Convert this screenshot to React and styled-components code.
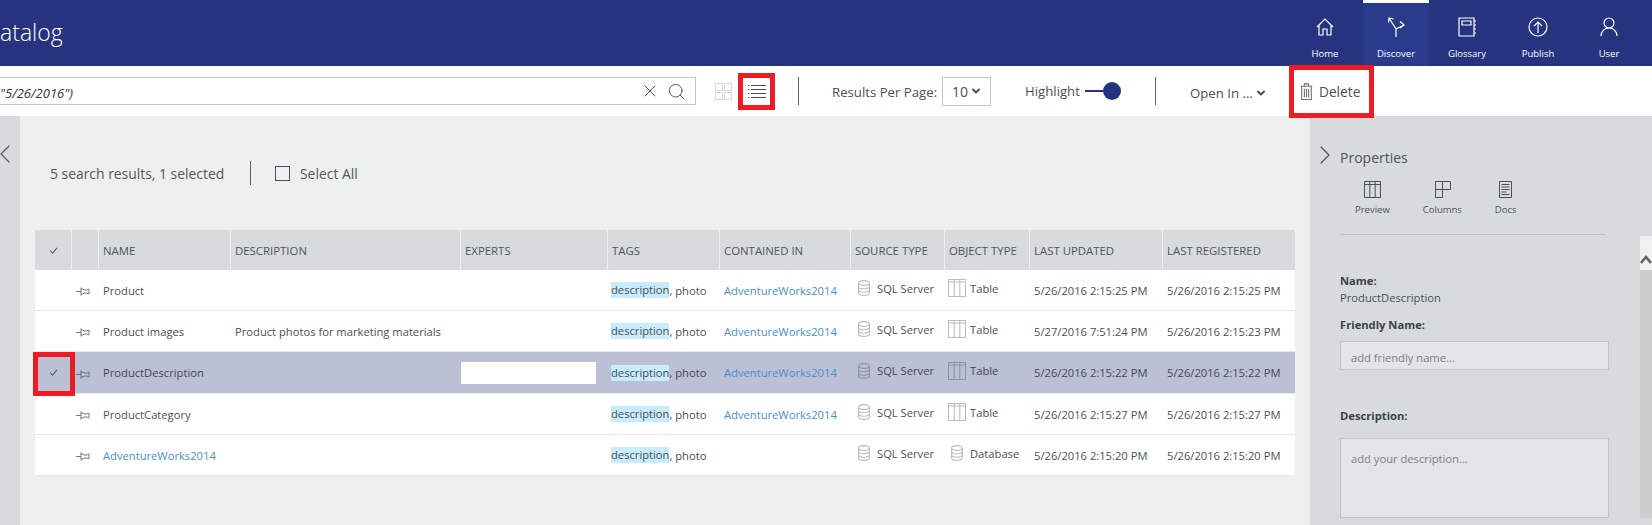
import React from 'react';
import styled, { createGlobalStyle } from 'styled-components';
import { ChevronDown, ChevronLeft, ChevronRight, Search, X } from 'lucide-react';

const GlobalStyle = createGlobalStyle`
    html, body {
        margin: 0;
        padding: 0;
        height: 100%;
        overflow: hidden;
        font-family: "Open Sans", "Noto Sans", "Liberation Sans", sans-serif;
        color: #4a4f59;
    }
`;

const Page = styled.div`
    width: 1652px;
    height: 525px;
    display: flex;
    flex-direction: column;
    overflow: hidden;
`;

// header
const TopBar = styled.header`
    height: 66px;
    flex: none;
    background: #263480;
    display: flex;
    justify-content: space-between;
    padding-right: 10px;
`;

const Title = styled.div`
    color: #fff;
    font-size: 23px;
    font-weight: 300;
    line-height: 64px;
`;

const Nav = styled.nav`
    display: flex;
    gap: 5px;
`;

const NavItem = styled.div`
    width: 66px;
    height: 66px;
    box-sizing: border-box;
    border-top: 3px solid ${(p) => (p.$active ? '#fff' : 'transparent')};
    background: ${(p) => (p.$active ? '#2b3b8b' : 'transparent')};
    color: #fff;
    display: flex;
    flex-direction: column;
    align-items: center;
    padding-top: 13px;
    font-size: 9.5px;
    svg {
        width: 22px;
        height: 22px;
        margin-bottom: 9px;
        fill: none;
        stroke: currentColor;
        stroke-width: 1.2;
    }
`;

// toolbar
const Toolbar = styled.div`
    height: 50px;
    flex: none;
    background: #fff;
    display: flex;
    align-items: center;
    font-size: 13.2px;
    white-space: nowrap;
`;

const SearchBox = styled.div`
    width: 697px;
    height: 28px;
    margin-left: -1px;
    box-sizing: border-box;
    border: 1px solid #c2c6ca;
    display: flex;
    align-items: center;
    font-style: italic;
    color: #333;
    font-size: 13px;
    svg {
        color: #555;
        stroke-width: 1.2;
        flex: none;
    }
`;

const QueryText = styled.span`
    flex: 1;
    padding-top: 4px;
`;

const SearchIcon = styled(Search)`
    margin: 0 9px 0 7px;
`;

const GridToggle = styled.svg`
    width: 17px;
    height: 17px;
    margin-left: 19px;
    fill: none;
    stroke: #d5d7da;
`;

const Marked = styled.div`
    box-sizing: border-box;
    border: 5px solid #ed1c24;
    display: flex;
    align-items: center;
    background: #fff;
    position: relative;
    z-index: 1;
`;

const ListButton = styled(Marked)`
    width: 37px;
    height: 37px;
    margin-left: 6px;
    justify-content: center;
    svg {
        width: 18px;
        height: 13px;
        stroke: #4a4f59;
    }
`;

const VRule = styled.div`
    width: 1px;
    height: 28px;
    background: #5b616b;
    margin-left: ${(p) => p.$ml}px;
    flex: none;
`;

const ToolLabel = styled.span`
    display: block;
    width: ${(p) => p.$w}px;
    margin-left: ${(p) => p.$ml}px;
    padding-top: ${(p) => p.$pt ?? 0}px;
    flex: none;
`;

const PerPage = styled.div`
    width: 49px;
    height: 29px;
    margin-left: 5px;
    box-sizing: border-box;
    border: 1px solid #c2c6ca;
    display: flex;
    align-items: center;
    padding-left: 9px;
    gap: 2px;
    font-size: 14px;
    svg {
        stroke-width: 4;
    }
`;

const Toggle = styled.div`
    width: 36px;
    margin-left: 3px;
    display: flex;
    align-items: center;
    flex: none;
`;

const ToggleTrack = styled.div`
    width: 18px;
    height: 2px;
    background: #263480;
`;

const ToggleKnob = styled.div`
    width: 18px;
    height: 18px;
    border-radius: 50%;
    background: #263480;
`;

const OpenChevron = styled(ChevronDown)`
    margin: 3px 0 0 3px;
    stroke-width: 4;
    flex: none;
`;

const DeleteButton = styled(Marked)`
    width: 85px;
    height: 53px;
    margin-left: 22px;
    padding-left: 6px;
    gap: 6px;
    font-size: 13.7px;
    svg {
        width: 13px;
        height: 17px;
        fill: none;
        stroke: #6a6f78;
        flex: none;
    }
`;

// body
const Body = styled.div`
    flex: 1;
    display: flex;
    min-height: 0;
`;

const LeftStrip = styled.div`
    width: 20px;
    flex: none;
    background: #d7dbde;
    padding-top: 22px;
    overflow: hidden;
    svg {
        display: block;
        margin-left: -11px;
        stroke-width: 0.9;
        color: #555b66;
    }
`;

const Results = styled.main`
    width: 1290px;
    flex: none;
    box-sizing: border-box;
    background: #eef0ef;
    padding: 45px 0 0 15px;
`;

const Summary = styled.div`
    height: 24px;
    margin-bottom: 45px;
    display: flex;
    align-items: center;
    font-size: 13.9px;
    color: #505662;
`;

const Count = styled.span`
    margin-left: 15px;
    width: 200px;
    white-space: nowrap;
`;

const Divider = styled.div`
    width: 1px;
    height: 24px;
    background: #5b616b;
`;

const CheckBox = styled.div`
    width: 15px;
    height: 15px;
    box-sizing: border-box;
    border: 1px solid #4a5060;
    margin: 0 10px 0 24px;
`;

const Row = styled.div`
    width: 1260px;
    display: grid;
    grid-template-columns: 36px 27px 132px 230px 147px 112px 131px 94px 85px 133px 133px;
    height: ${(p) => (p.$head ? '40px' : p.$selected ? '42px' : '41px')};
    box-sizing: border-box;
    background: ${(p) => (p.$head ? '#d7dbde' : p.$selected ? '#bbc0d5' : '#fff')};
    border-bottom: ${(p) => (p.$head ? 'none' : '1px solid #e8e8f0')};
    font-size: 11.2px;
    color: ${(p) => (p.$selected ? '#44485a' : '#4a4f59')};
`;

const HeadCell = styled.div`
    display: flex;
    align-items: center;
    justify-content: ${(p) => (p.$center ? 'center' : 'flex-start')};
    padding-left: ${(p) => (p.$center ? 0 : 4)}px;
    border-left: ${(p) => (p.$first ? 'none' : '1px solid #eceef0')};
    font-size: 11.4px;
    color: #4f5460;
    white-space: nowrap;
    overflow: hidden;
`;

const Cell = styled.div`
    display: flex;
    align-items: center;
    justify-content: ${(p) => (p.$center ? 'center' : 'flex-start')};
    padding-left: ${(p) => (p.$center ? 0 : p.$pl ?? 5)}px;
    padding-bottom: ${(p) => p.$pb ?? 0}px;
    white-space: nowrap;
    position: relative;
    gap: ${(p) => p.$gap ?? 0}px;
`;

const CheckMark = styled.svg`
    width: 9px;
    height: 7px;
    fill: none;
    stroke: #555a66;
    stroke-width: 1.2;
`;

const RedMark = styled.div`
    position: absolute;
    left: -2px;
    top: 0;
    width: 42px;
    height: 44px;
    box-sizing: border-box;
    border: 5px solid #ed1c24;
    z-index: 1;
`;

const Pin = styled.svg`
    width: 16px;
    height: 10px;
    fill: none;
    stroke: ${(p) => (p.$selected ? '#6a6f80' : '#777')};
    margin-left: 5px;
    margin-top: 2px;
`;

const Link = styled.span`
    color: #4a8fd0;
`;

const Hit = styled.span`
    background: #c8ecfb;
    line-height: 16px;
    display: inline-block;
`;

const Redacted = styled.div`
    width: 135px;
    height: 22px;
    background: #fff;
`;

const TypeIcon = styled.svg`
    flex: none;
    fill: none;
    stroke: ${(p) => (p.$selected ? '#8e93a8' : '#b9bcc2')};
    stroke-width: 1.1;
`;

// properties
const Panel = styled.aside`
    flex: 1;
    background: #d7dbde;
    position: relative;
    padding: 30px 0 0 30px;
    box-sizing: border-box;
`;

const PanelTitle = styled.div`
    display: flex;
    align-items: center;
    font-size: 14px;
    color: #4f5460;
    height: 22px;
    svg {
        position: absolute;
        left: -1px;
        top: 23px;
        stroke-width: 0.9;
    }
`;

const Tabs = styled.div`
    display: flex;
    margin-top: 11px;
    padding-left: 15px;
    gap: 33px;
    width: 266px;
    box-sizing: border-box;
    height: 56px;
    border-bottom: 1px solid #bfc3c7;
`;

const Tab = styled.div`
    display: flex;
    flex-direction: column;
    align-items: center;
    font-size: 9.5px;
    color: #4f5460;
    svg {
        width: 17px;
        height: 17px;
        margin: 2px 0 5px;
        fill: none;
        stroke: #4a4f59;
    }
`;

const FieldLabel = styled.div`
    font-size: 11.2px;
    font-weight: 700;
    color: #3c4048;
    margin-top: ${(p) => p.$mt}px;
    line-height: 16px;
`;

const FieldValue = styled.div`
    font-size: 11.2px;
    color: #4a4f59;
    line-height: 16px;
    margin-top: 1px;
`;

const InputBox = styled.div`
    width: 269px;
    height: ${(p) => p.$h}px;
    margin-top: ${(p) => p.$mt}px;
    box-sizing: border-box;
    background: #e2e4e6;
    border: 1px solid #bfc5cc;
    padding: ${(p) => p.$pt}px 0 0 10px;
    font-size: 11.2px;
    color: #7d8187;
`;

const Scrollbar = styled.div`
    position: absolute;
    right: 0;
    top: 120px;
    width: 12px;
    height: 282px;
    display: flex;
    flex-direction: column;
`;

const ScrollUp = styled.div`
    height: 34px;
    background: #f0f0f0;
    display: flex;
    justify-content: center;
    align-items: flex-end;
    padding-bottom: 6px;
    box-sizing: border-box;
    svg {
        width: 12px;
        height: 9px;
        fill: none;
        stroke: #606060;
        stroke-width: 2.5;
    }
`;

const ScrollTrack = styled.div`
    flex: 1;
    background: #cdcdcd;
`;

const DbIcon = ({ selected }) => (
    <TypeIcon $selected={selected} width="12" height="16" viewBox="0 0 12 16">
        <ellipse cx="6" cy="3" rx="5.4" ry="2.4" />
        <path d="M.6 3v10c0 1.3 2.4 2.4 5.4 2.4s5.4-1.1 5.4-2.4V3M.6 6.4c0 1.3 2.4 2.4 5.4 2.4s5.4-1.1 5.4-2.4M.6 9.8c0 1.3 2.4 2.4 5.4 2.4s5.4-1.1 5.4-2.4" />
    </TypeIcon>
);

const TableIcon = ({ selected }) => (
    <TypeIcon $selected={selected} width="18" height="18" viewBox="0 0 18 18">
        <path d="M.5.5h17v17H.5zM.5 3h17M6.2 .5v17M11.8 .5v17" />
    </TypeIcon>
);

const rows = [
    { name: 'Product', updated: '5/26/2016 2:15:25 PM', registered: '5/26/2016 2:15:25 PM', container: 'AdventureWorks2014', type: 'Table' },
    { name: 'Product images', description: 'Product photos for marketing materials', updated: '5/27/2016 7:51:24 PM', registered: '5/26/2016 2:15:23 PM', container: 'AdventureWorks2014', type: 'Table' },
    { name: 'ProductDescription', selected: true, updated: '5/26/2016 2:15:22 PM', registered: '5/26/2016 2:15:22 PM', container: 'AdventureWorks2014', type: 'Table' },
    { name: 'ProductCategory', updated: '5/26/2016 2:15:27 PM', registered: '5/26/2016 2:15:27 PM', container: 'AdventureWorks2014', type: 'Table' },
    { name: 'AdventureWorks2014', link: true, updated: '5/26/2016 2:15:20 PM', registered: '5/26/2016 2:15:20 PM', type: 'Database' },
];

const columns = ['NAME', 'DESCRIPTION', 'EXPERTS', 'TAGS', 'CONTAINED IN', 'SOURCE TYPE', 'OBJECT TYPE', 'LAST UPDATED', 'LAST REGISTERED'];

const App = () => {
    return (
        <Page>
            <GlobalStyle />
            <TopBar>
                <Title>atalog</Title>
                <Nav>
                    <NavItem>
                        <svg viewBox="0 0 22 22"><path d="M3 11 11 3l8 8M5 9.500V19h4v-6h4v6h4V9.500" /></svg>
                        Home
                    </NavItem>
                    <NavItem $active>
                        <svg viewBox="0 0 22 22"><path d="M11 21v-8L4 2M3.500 6.500 4 2l4.500 1M11 13l8-4M15 5.500 19 9l-4 3" /></svg>
                        Discover
                    </NavItem>
                    <NavItem>
                        <svg viewBox="0 0 22 22"><path d="M3 2h15v18H3zM6 5h9v4H6zM18 5h2M18 9h2M18 13h2M18 17h2" /></svg>
                        Glossary
                    </NavItem>
                    <NavItem>
                        <svg viewBox="0 0 22 22"><circle cx="11" cy="11" r="9" /><path d="M11 17V6M7 10l4-4 4 4" /></svg>
                        Publish
                    </NavItem>
                    <NavItem>
                        <svg viewBox="0 0 22 22"><circle cx="11" cy="7" r="5" /><path d="M3 20c0-4.500 3.500-8 8-8s8 3.500 8 8" /></svg>
                        User
                    </NavItem>
                </Nav>
            </TopBar>
            <Toolbar>
                <SearchBox>
                    <QueryText>"5/26/2016")</QueryText>
                    <X size={20} />
                    <SearchIcon size={19} />
                </SearchBox>
                <GridToggle viewBox="0 0 17 17">
                    <path d="M.5.5h7v7h-7zM9.500.5h7v7h-7zM.5 9.500h7v7h-7zM9.500 9.500h7v7h-7z" />
                </GridToggle>
                <ListButton>
                    <svg viewBox="0 0 18 13">
                        <path d="M3 .5h15M3 4.500h15M3 8.500h15M3 12.500h15M0 .5h1.500M0 4.500h1.500M0 8.500h1.500M0 12.500h1.500" />
                    </svg>
                </ListButton>
                <VRule $ml={23} />
                <ToolLabel $ml={33} $w={105} $pt={2}>Results Per Page:</ToolLabel>
                <PerPage>10<ChevronDown size={12} /></PerPage>
                <ToolLabel $ml={34} $w={57}>Highlight</ToolLabel>
                <Toggle>
                    <ToggleTrack />
                    <ToggleKnob />
                </Toggle>
                <VRule $ml={34} />
                <ToolLabel $ml={34} $w={62} $pt={3}>Open In ...</ToolLabel>
                <OpenChevron size={12} />
                <DeleteButton>
                    <svg viewBox="0 0 12 16">
                        <path d="M.5 3h11M4 3V.8h4V3M1.500 3v12.500h9V3M4 5.500v8M6 5.500v8M8 5.500v8" />
                    </svg>
                    Delete
                </DeleteButton>
            </Toolbar>
            <Body>
                <LeftStrip><ChevronLeft size={32} /></LeftStrip>
                <Results>
                    <Summary>
                        <Count>5 search results, 1 selected</Count>
                        <Divider />
                        <CheckBox />
                        Select All
                    </Summary>
                    <Row $head>
                        <HeadCell $first $center>
                            <CheckMark viewBox="0 0 10 8"><path d="M1 4l3 3 5-6" /></CheckMark>
                        </HeadCell>
                        <HeadCell />
                        {columns.map((c) => <HeadCell key={c}>{c}</HeadCell>)}
                    </Row>
                    {rows.map((r) => (
                        <Row key={r.name} $selected={r.selected}>
                            <Cell $center>
                                {r.selected && <CheckMark viewBox="0 0 10 8"><path d="M1 4l3 3 5-6" /></CheckMark>}
                                {r.selected && <RedMark />}
                            </Cell>
                            <Cell $pl={0}>
                                <Pin $selected={r.selected} viewBox="0 0 16 10">
                                    <path d="M0 5.500h5M5 1.500v8M5 3h2l1 1h3l2-1v5l-2-1H8L7 8H5" />
                                </Pin>
                            </Cell>
                            <Cell>{r.link ? <Link>{r.name}</Link> : r.name}</Cell>
                            <Cell>{r.description}</Cell>
                            <Cell $pl={1}>{r.selected && <Redacted />}</Cell>
                            <Cell $pl={4}><Hit>description</Hit>, photo</Cell>
                            <Cell>{r.container && <Link>{r.container}</Link>}</Cell>
                            <Cell $pl={8} $gap={7} $pb={4}><DbIcon selected={r.selected} />SQL Server</Cell>
                            {r.type === 'Table'
                                ? <Cell $pl={4} $gap={4} $pb={4}><TableIcon selected={r.selected} />Table</Cell>
                                : <Cell $pl={7} $gap={7} $pb={4}><DbIcon selected={r.selected} />Database</Cell>}
                            <Cell>{r.updated}</Cell>
                            <Cell>{r.registered}</Cell>
                        </Row>
                    ))}
                </Results>
                <Panel>
                    <PanelTitle>
                        <ChevronRight size={32} />
                        Properties
                    </PanelTitle>
                    <Tabs>
                        <Tab>
                            <svg viewBox="0 0 17 17"><path d="M.5.5h16v16H.5zM.5 3.500h16M5.800 .5v16M11.200 .5v16" /></svg>
                            Preview
                        </Tab>
                        <Tab>
                            <svg viewBox="0 0 17 17"><path d="M1.500.5h15v8h-15zM8.500.5v16h-7v-16M1.500 8.500h7" /></svg>
                            Columns
                        </Tab>
                        <Tab>
                            <svg viewBox="0 0 17 17"><path d="M2.500.5h12v16h-12zM4.500 3.500h8M4.500 6h8M4.500 8.500h8M4.500 11h5M4.500 13.500h8" /></svg>
                            Docs
                        </Tab>
                    </Tabs>
                    <FieldLabel $mt={38}>Name:</FieldLabel>
                    <FieldValue>ProductDescription</FieldValue>
                    <FieldLabel $mt={11}>Friendly Name:</FieldLabel>
                    <InputBox $h={29} $mt={8} $pt={8}>add friendly name...</InputBox>
                    <FieldLabel $mt={38}>Description:</FieldLabel>
                    <InputBox $h={80} $mt={14} $pt={12}>add your description...</InputBox>
                    <Scrollbar>
                        <ScrollUp>
                            <svg viewBox="0 0 12 9"><path d="M1 8l5-6 5 6" /></svg>
                        </ScrollUp>
                        <ScrollTrack />
                    </Scrollbar>
                </Panel>
            </Body>
        </Page>
    );
};

export default App;
